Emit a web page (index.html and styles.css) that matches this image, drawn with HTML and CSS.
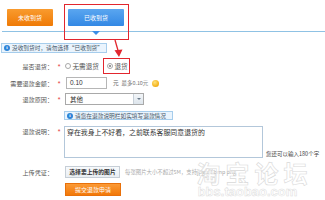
FILE: index.html
```html
<!DOCTYPE html>
<html lang="zh-CN">
<head>
<meta charset="utf-8">
<title>退款申请</title>
<link rel="stylesheet" href="styles.css">
</head>
<body>
<div class="page">
  <div class="tabs">
    <div class="tab tab-orange">未收到货</div>
    <div class="tab tab-blue">已收到货</div>
  </div>

  <svg class="arrow" width="18" height="21" viewBox="0 0 18 21">
    <line x1="7" y1="2" x2="10.3" y2="13.5" stroke="#e2262e" stroke-width="1.3"/>
    <polygon points="11,19 6.5,12.3 14.5,11.5" fill="#e2262e"/>
  </svg>

  <div class="notice notice-top">
    <span class="info-icon">i</span><span class="notice-text">没收到货时，请勿选择“已收到货”</span>
  </div>

  <div class="form">
    <div class="row row-radio">
      <span class="label">是否退货：</span><span class="star">*</span>
      <div class="field">
        <span class="radio"></span><span class="opt">无需退货</span>
        <span class="highlight"><span class="radio checked"></span><span class="opt">退货</span></span>
      </div>
    </div>

    <div class="row row-amount">
      <span class="label">需要退款金额：</span><span class="star">*</span>
      <div class="field">
        <span class="input">0.10</span>
        <span class="unit">元</span>
        <span class="max">最多0.10元</span>
        <span class="coin"></span>
      </div>
    </div>

    <div class="row row-reason">
      <span class="label">退款原因：</span><span class="star">*</span>
      <div class="field">
        <span class="select"><span class="select-text">其他</span><span class="select-btn"></span></span>
      </div>
    </div>

    <div class="row row-tip">
      <span></span><span></span>
      <div class="field">
        <div class="notice notice-inline"><span class="info-icon">i</span><span class="notice-text">请您在退款说明栏如实填写退款情况</span></div>
      </div>
    </div>

    <div class="row row-desc">
      <span class="label label-top">退款说明：</span><span class="star star-top">*</span>
      <textarea class="textarea" readonly>穿在我身上不好看，之前联系客服同意退货的</textarea>
      <span class="counter">您还可以输入180个字</span>
    </div>

    <div class="row row-upload">
      <span class="label">上传凭证：</span><span></span>
      <div class="field">
        <span class="upload-btn">选择要上传的图片</span>
        <span class="hint">每张图片大小不超过5M，支持jpg gif bmp png</span>
      </div>
    </div>

    <div class="row row-submit">
      <span></span><span></span>
      <div class="field">
        <span class="submit">提交退款申请</span>
      </div>
    </div>
  </div>

  <div class="watermark">
    <div class="wm-big">淘宝论坛</div>
    <div class="wm-small">bbs.taobao.com</div>
  </div>
</div>
</body>
</html>
```

FILE: styles.css
```css
html, body {
  margin: 0;
  padding: 0;
  background: #ffffff;
}

.page {
  position: relative;
  width: 325px;
  height: 200px;
  overflow: hidden;
  background: #ffffff;
  font-family: "Noto Sans CJK SC", "Liberation Sans", sans-serif;
  color: #555555;
}

/* ---------- tabs ---------- */
.tabs {
  display: flex;
  gap: 15px;
  height: 22px;
  padding: 9px 0 0 5px;
  margin-left: 2px;
  border-bottom: 1px solid #8fc2e4;
}

.tab {
  position: relative;
  height: 17px;
  line-height: 17px;
  text-align: center;
  font-size: 6px;
  color: #ffffff;
  border-radius: 1px;
}

.tab-orange {
  width: 46px;
  background: linear-gradient(#f99b2e, #ef7a06);
}

.tab-blue {
  width: 56px;
  background: linear-gradient(#5aa6f0, #3388e4);
}

.tab-blue::after {
  content: "";
  position: absolute;
  left: 24px;
  top: 22px;
  border-top: 4px solid #3a8ee6;
  border-left: 4px solid transparent;
  border-right: 4px solid transparent;
}

.tab-blue::before {
  content: "";
  position: absolute;
  left: -4px;
  top: -5px;
  right: -5px;
  bottom: -14px;
  border: 1.5px solid #e2262e;
}

.arrow {
  position: absolute;
  left: 108px;
  top: 38px;
}

/* ---------- notices ---------- */
.notice {
  display: flex;
  align-items: center;
  gap: 2px;
  box-sizing: border-box;
  background: #eaf4fd;
  border: 1px solid #a6cdec;
  color: #445566;
  white-space: nowrap;
}

.notice-top {
  width: 106px;
  height: 10px;
  margin: 11px 0 0 1px;
  padding: 0 2px;
}

.notice-inline {
  width: 109px;
  height: 9px;
  margin-left: -1px;
  padding: 0 2px;
}

.notice-text {
  font-size: 5.7px;
  line-height: 8px;
}

.info-icon {
  display: flex;
  align-items: center;
  justify-content: center;
  flex: none;
  width: 6px;
  height: 6px;
  border-radius: 50%;
  background: #2d84d8;
  color: #ffffff;
  font-family: "Liberation Serif", serif;
  font-weight: bold;
  font-size: 5px;
  line-height: 6px;
}

/* ---------- form ---------- */
.form {
  display: flex;
  flex-direction: column;
}

.row {
  display: grid;
  grid-template-columns: 53px 12px auto;
  align-items: center;
}

.label {
  text-align: right;
  font-size: 6.1px;
  line-height: 9px;
  color: #555555;
  white-space: nowrap;
}

.star {
  text-align: center;
  font-size: 7px;
  line-height: 9px;
  color: #e4393c;
  font-family: "Liberation Sans", sans-serif;
}

.field {
  display: flex;
  align-items: center;
  white-space: nowrap;
}

/* row 1 - radios */
.row-radio {
  margin-top: 5px;
  height: 16px;
}

.radio {
  display: inline-block;
  box-sizing: border-box;
  width: 6px;
  height: 6px;
  border: 1px solid #a8a8a8;
  border-radius: 50%;
  background: #ffffff;
  margin-right: 1.5px;
  position: relative;
}

.radio.checked::after {
  content: "";
  position: absolute;
  left: 1px;
  top: 1px;
  width: 2px;
  height: 2px;
  border-radius: 50%;
  background: #777777;
}

.opt {
  font-size: 6.6px;
  line-height: 9px;
  color: #555555;
}

.highlight {
  display: flex;
  align-items: center;
  box-sizing: border-box;
  height: 16px;
  margin-left: 4px;
  padding: 0 1.5px 0 3px;
  border: 1.5px solid #e2262e;
}

/* row 2 - amount */
.row-amount {
  margin-top: 3px;
  height: 12px;
}

.input {
  box-sizing: border-box;
  width: 41px;
  height: 12px;
  margin-left: 1px;
  padding-left: 3px;
  border: 1px solid #b6b6b6;
  font-family: "Liberation Sans", sans-serif;
  font-size: 6.5px;
  line-height: 10px;
  color: #333333;
}

.unit {
  margin-left: 6px;
  font-size: 5.6px;
  line-height: 9px;
  color: #666666;
}

.max {
  margin-left: 3px;
  font-size: 5.4px;
  line-height: 9px;
  color: #777777;
}

.coin {
  display: inline-block;
  width: 7px;
  height: 7px;
  margin-left: 4px;
  border-radius: 50%;
  background: radial-gradient(circle at 40% 35%, #ffe27a, #f3b21c 65%, #d89410);
}

/* row 3 - select */
.row-reason {
  margin-top: 4px;
  height: 12px;
}

.select {
  display: flex;
  box-sizing: border-box;
  width: 79px;
  height: 12px;
  border: 1px solid #a9a9a9;
  background: #ffffff;
}

.select-text {
  flex: 1;
  padding-left: 4px;
  font-size: 6.5px;
  line-height: 10px;
  color: #333333;
}

.select-btn {
  position: relative;
  width: 9px;
  background: linear-gradient(#f3f6f9, #dde5ec);
  border-left: 1px solid #c7d0d8;
}

.select-btn::after {
  content: "";
  position: absolute;
  left: 2.5px;
  top: 4px;
  border-top: 2px solid #6a7a8a;
  border-left: 2px solid transparent;
  border-right: 2px solid transparent;
}

/* tip */
.row-tip {
  margin-top: 6px;
  height: 9px;
}

/* description */
.row-desc {
  margin-top: 6px;
  grid-template-columns: 53px 12px 199px auto;
  align-items: start;
  height: 32px;
}

.label-top,
.star-top {
  margin-top: 1px;
}

.textarea {
  box-sizing: border-box;
  width: 199px;
  height: 32px;
  margin: 0 0 0 -1px;
  padding: 1px 2px;
  border: 1px solid #b3c7da;
  resize: none;
  outline: none;
  font-family: "Noto Sans CJK SC", sans-serif;
  font-size: 6.9px;
  line-height: 9px;
  color: #333333;
  overflow: hidden;
  background: #ffffff;
}

.counter {
  align-self: end;
  margin-left: 2px;
  font-size: 5.5px;
  line-height: 8px;
  color: #444444;
  white-space: nowrap;
}

/* upload */
.row-upload {
  margin-top: 8px;
  height: 12px;
}

.upload-btn {
  box-sizing: border-box;
  width: 55px;
  height: 12px;
  border: 1px solid #c6ced6;
  background: linear-gradient(#f8fafc, #e9eef3);
  text-align: center;
  font-size: 5.8px;
  line-height: 10px;
  font-weight: bold;
  color: #333333;
}

.hint {
  margin-left: 5px;
  font-size: 5.4px;
  line-height: 9px;
  color: #aaaaaa;
}

/* submit */
.row-submit {
  margin-top: 5px;
  height: 13px;
}

.submit {
  box-sizing: border-box;
  width: 56px;
  height: 13px;
  border: 1px solid #e8700a;
  background: linear-gradient(#fb9a36, #f27808);
  text-align: center;
  font-size: 6px;
  line-height: 11px;
  color: #ffffff;
}

/* watermark */
.watermark {
  position: absolute;
  left: 192px;
  top: 160px;
  width: 125px;
  text-align: center;
  pointer-events: none;
}

.wm-big {
  font-size: 24px;
  line-height: 25px;
  letter-spacing: 5px;
  font-weight: bold;
  color: rgba(255, 255, 255, 0.55);
  -webkit-text-stroke: 0.6px #d9d9d9;
}

.wm-small {
  margin-left: -14px;
  font-family: "Liberation Sans", sans-serif;
  font-size: 13px;
  line-height: 13px;
  font-weight: bold;
  color: rgba(255, 255, 255, 0.6);
  -webkit-text-stroke: 0.5px #dddddd;
}
```
